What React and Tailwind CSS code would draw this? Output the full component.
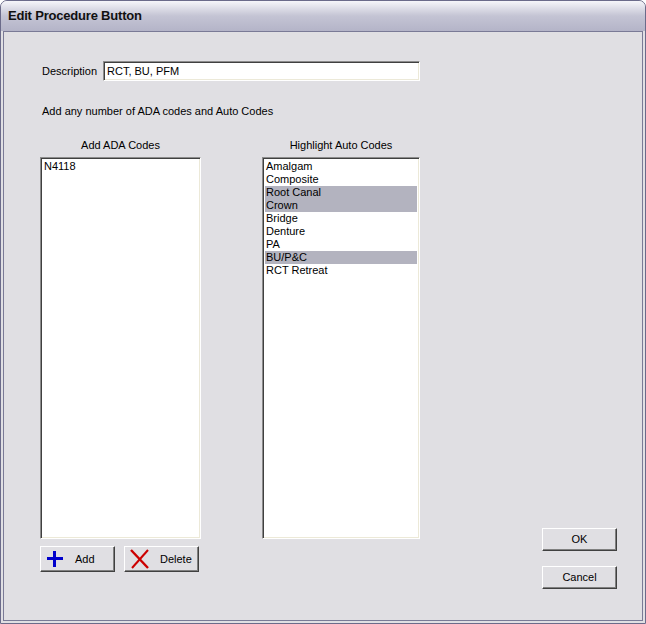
import React from "react";

const autoCodes = [
  { name: "Amalgam", on: false },
  { name: "Composite", on: false },
  { name: "Root Canal", on: true },
  { name: "Crown", on: true },
  { name: "Bridge", on: false },
  { name: "Denture", on: false },
  { name: "PA", on: false },
  { name: "BU/P&C", on: true },
  { name: "RCT Retreat", on: false },
];

const sunken =
  "bg-white border border-t-[#8c8c8c] border-l-[#8c8c8c] border-b-[#ffffff] border-r-[#ffffff] shadow-[inset_1px_1px_0_#404040,inset_-1px_-1px_0_#ece9d8]";

const raised =
  "bg-[#e0dfe3] border border-t-[#ffffff] border-l-[#ffffff] border-b-[#404040] border-r-[#404040] shadow-[inset_-1px_-1px_0_#808080] flex items-center";

const PlusIcon = () => (
  <svg width="16" height="16" viewBox="0 0 16 16">
    <rect x="6" y="0" width="3" height="16" fill="#0000cc" />
    <rect x="0" y="6" width="16" height="3" fill="#0000cc" />
  </svg>
);

const CrossIcon = () => (
  <svg width="20" height="20" viewBox="0 0 20 20">
    <path d="M1 1 L18 19" stroke="#cc0000" strokeWidth="2.4" />
    <path d="M18 1 L2 19" stroke="#cc0000" strokeWidth="2" />
  </svg>
);

const App = () => {
  return (
    <div
      className="w-[646px] h-[624px] flex flex-col bg-[#e0dfe3] border border-[#6b6b8a] rounded-t-[7px] overflow-hidden text-[11px] text-black"
      style={{ fontFamily: '"Liberation Sans", Arial, sans-serif' }}
    >
      {/* title bar */}
      <div className="h-[30px] shrink-0 flex items-center pl-[7px] bg-gradient-to-b from-[#f6f6fa] via-[#c4c4d4] to-[#b4b4c8]">
        <span className="text-[13px] font-bold text-[#111] tracking-[-0.2px]">
          Edit Procedure Button
        </span>
      </div>

      {/* client area */}
      <div className="flex-1 mx-[2px] mb-[2px] border border-[#7a7a96] flex flex-col pl-[36px]">
        <div className="flex items-center mt-[29px] h-[20px]">
          <span className="ml-[2px] w-[61px]">Description</span>
          <div className={`${sunken} w-[317px] h-[20px] flex items-center pl-[3px] text-[11px]`}>
            RCT, BU, PFM
          </div>
        </div>

        <div className="mt-[24px] ml-[2px] leading-[13px]">
          Add any number of ADA codes and Auto Codes
        </div>

        <div className="flex mt-[21px]">
          <div className="flex flex-col">
            <div className="flex">
              <div className="flex flex-col w-[161px]">
                <div className="text-center leading-[13px] h-[18px]">Add ADA Codes</div>
                <div className={`${sunken} h-[382px] pl-[3px] pt-[2px] leading-[13px]`}>
                  N4118
                </div>
              </div>
              <div className="flex flex-col w-[158px] ml-[61px]">
                <div className="text-center leading-[13px] h-[18px]">Highlight Auto Codes</div>
                <div className={`${sunken} h-[382px] p-[2px] leading-[13px]`}>
                  {autoCodes.map((c) => (
                    <div
                      key={c.name}
                      className={`h-[13px] pl-[1px] ${c.on ? "bg-[#b3b3bf]" : ""}`}
                    >
                      {c.name}
                    </div>
                  ))}
                </div>
              </div>
            </div>

            <div className="flex gap-[9px] mt-[7px]">
              <button className={`${raised} w-[75px] h-[26px] pl-[6px]`}>
                <PlusIcon />
                <span className="ml-[12px]">Add</span>
              </button>
              <button className={`${raised} w-[75px] h-[26px] pl-[5px]`}>
                <CrossIcon />
                <span className="ml-[10px]">Delete</span>
              </button>
            </div>
          </div>

          <div className="flex flex-col ml-[122px] pt-[389px] gap-[15px]">
            <button className={`${raised} justify-center w-[75px] h-[23px]`}>OK</button>
            <button className={`${raised} justify-center w-[75px] h-[23px]`}>Cancel</button>
          </div>
        </div>
      </div>
    </div>
  );
};

export default App;
